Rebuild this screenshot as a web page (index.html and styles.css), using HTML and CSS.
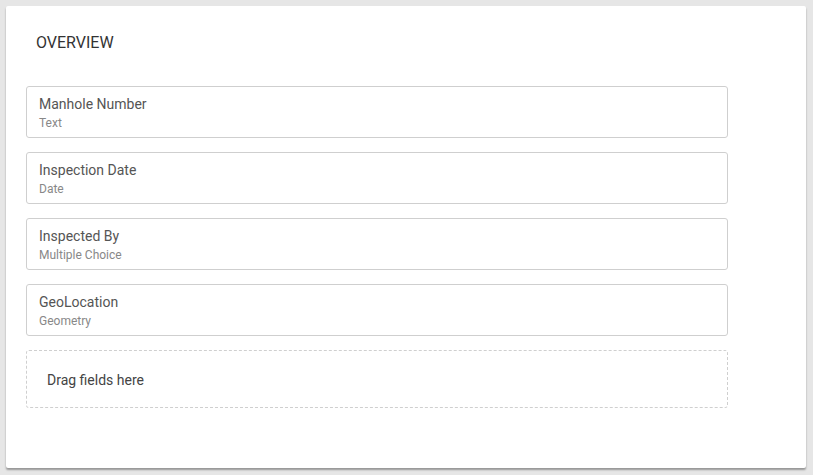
FILE: index.html
```html
<!DOCTYPE html>
<html lang="en">
<head>
<meta charset="UTF-8">
<title>Overview</title>
<link rel="stylesheet" href="styles.css">
</head>
<body>
<div class="card">
    <h2 class="section-title">OVERVIEW</h2>

    <div class="field-list">
        <div class="field">
            <div class="field-name">Manhole Number</div>
            <div class="field-type">Text</div>
        </div>
        <div class="field">
            <div class="field-name">Inspection Date</div>
            <div class="field-type">Date</div>
        </div>
        <div class="field">
            <div class="field-name">Inspected By</div>
            <div class="field-type">Multiple Choice</div>
        </div>
        <div class="field">
            <div class="field-name">GeoLocation</div>
            <div class="field-type">Geometry</div>
        </div>
        <div class="drop-zone">Drag fields here</div>
    </div>
</div>
</body>
</html>
```

FILE: styles.css
```css
html,
body {
    height: 100%;
}

body {
    margin: 0;
    padding: 6px;
    box-sizing: border-box;
    background: #e6e6e6;
    font-family: Roboto, 'Noto Sans', sans-serif;
}

.card {
    width: 800px;
    height: 462px;
    box-sizing: border-box;
    padding: 27px 20px 0;
    background: #fff;
    border-radius: 2px;
    box-shadow: 0 2px 2px rgba(0, 0, 0, 0.35);
}

.section-title {
    margin: 0 0 33px 10px;
    font-size: 16px;
    font-weight: 400;
    line-height: 20px;
    color: #333;
}

.field-list {
    width: 702px;
    display: flex;
    flex-direction: column;
    gap: 14px;
}

.field {
    height: 52px;
    box-sizing: border-box;
    border: 1px solid #cfcfcf;
    border-radius: 3px;
    padding: 7px 12px 0;
}

.field-name {
    font-size: 14px;
    line-height: 20px;
    color: #555;
}

.field-type {
    font-size: 12px;
    line-height: 18px;
    color: #888;
}

.drop-zone {
    height: 58px;
    box-sizing: border-box;
    border: 1px dashed #cfcfcf;
    border-radius: 3px;
    padding: 19px 20px 0;
    font-size: 14px;
    line-height: 20px;
    color: #444;
}
```
